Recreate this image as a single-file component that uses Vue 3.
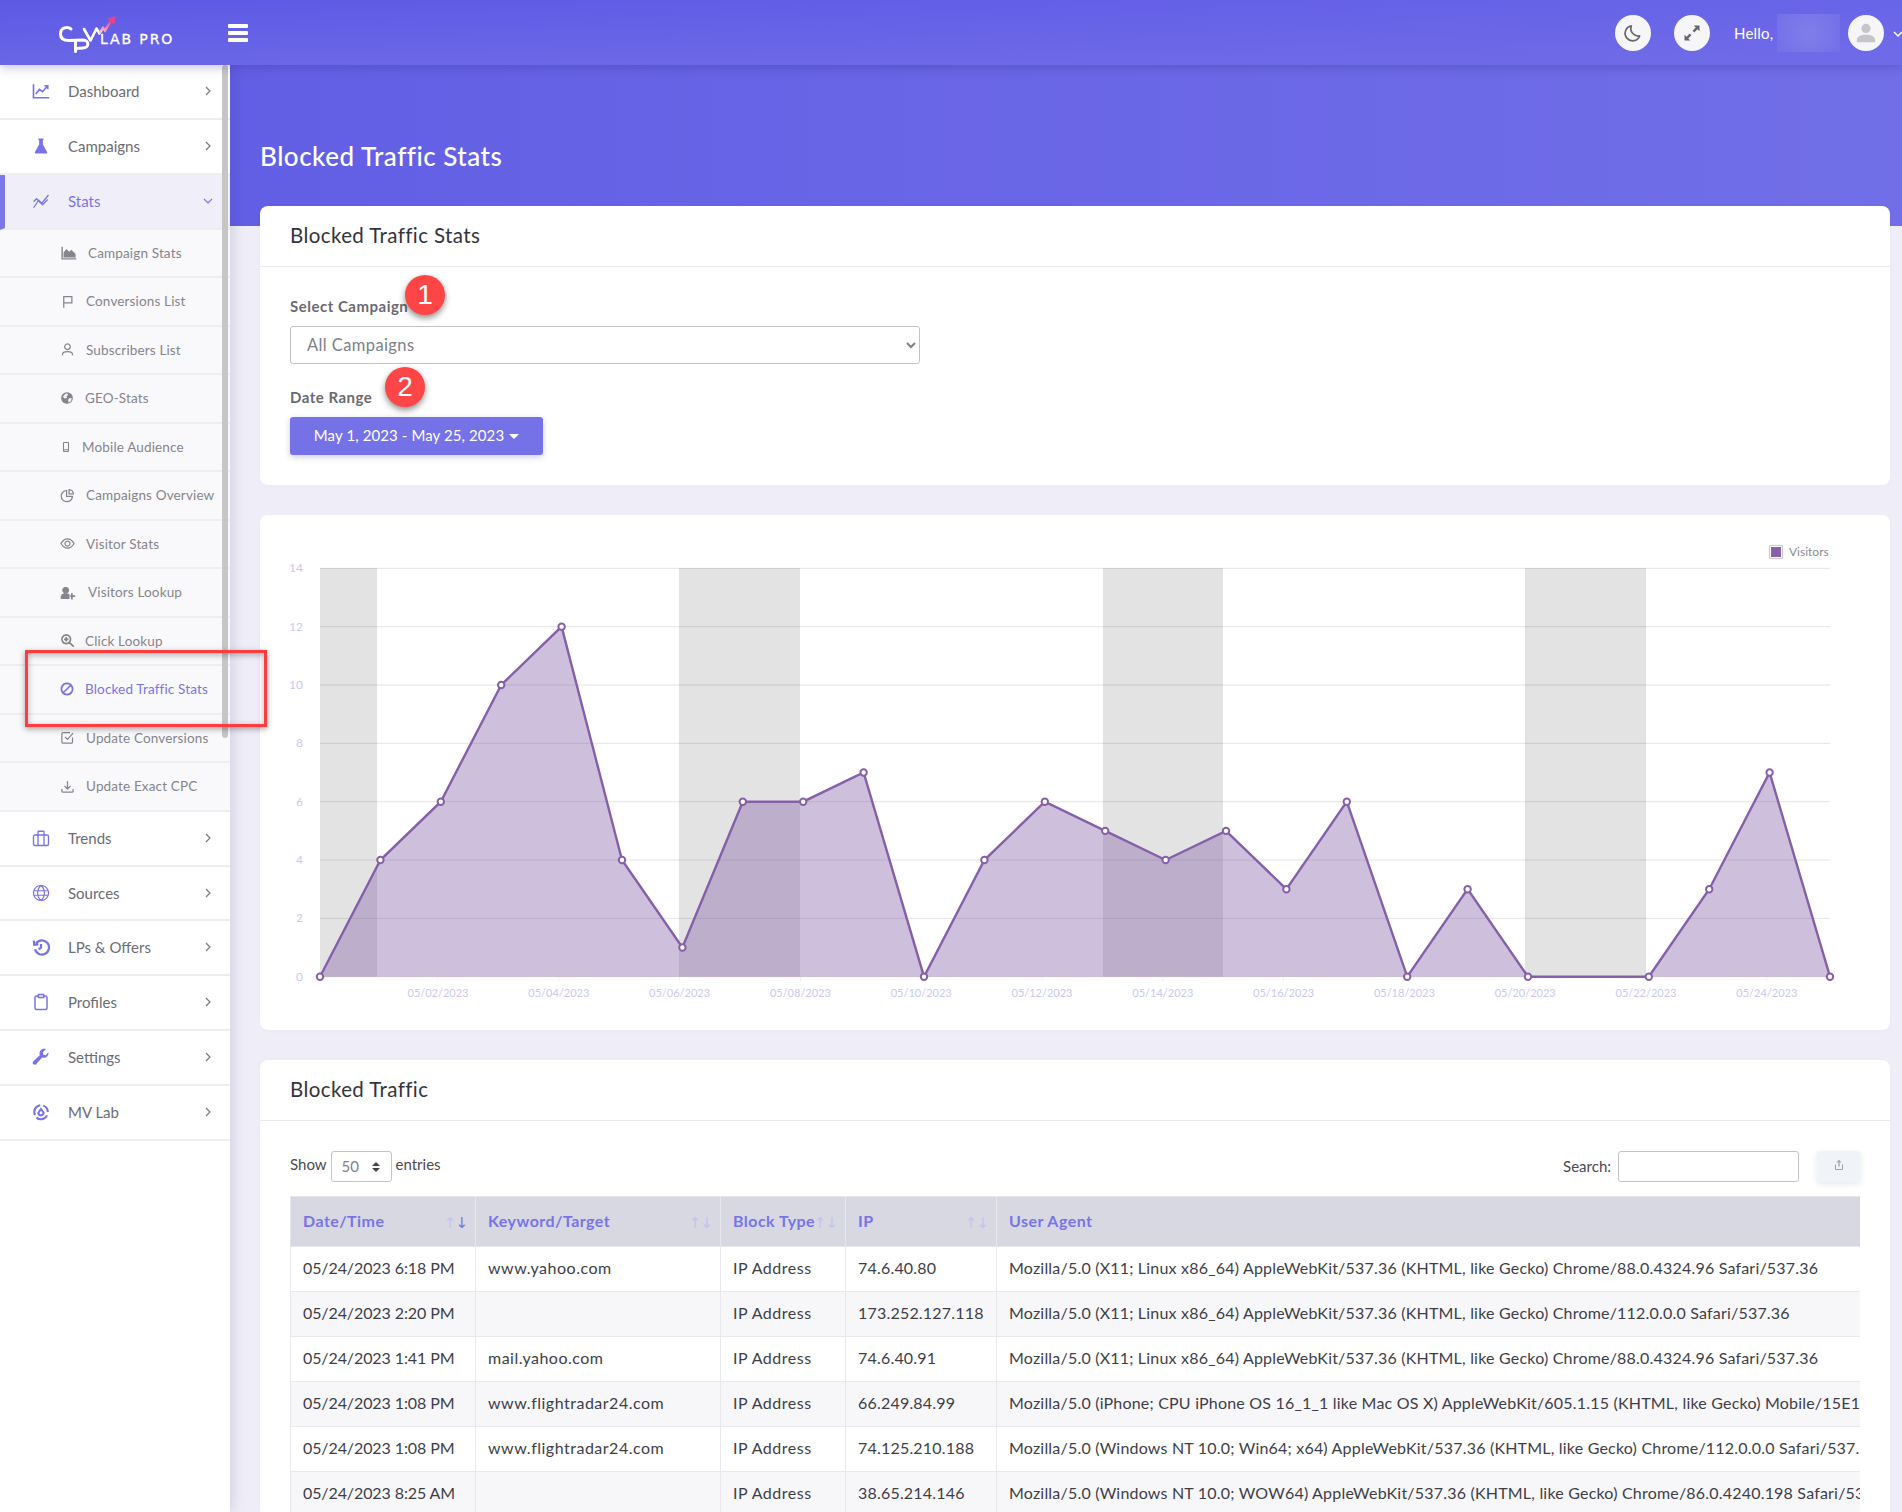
<script setup>
const icons = {
  chartLine: { d: 'M2 3V21H23M5 16L10 10L14 13L21 5M16.500 5H21V9.500', w: 2.200 },
  flask: { d: 'M8.500 2h7v2H14.500V10l5.500 9.500c.6 1.100-.1 2.500-1.400 2.500H5.400c-1.300 0-2-1.400-1.400-2.500L9.500 10V4h-1z', fill: true },
  stats: { d: 'M2 21L9 11L13 15L22 4M2 13L6 9L14 17L21 10', w: 1.700 },
  chartArea: { d: 'M2 4V22H23V20H4V4zM5 19V12l4-5 4 4 3-3 6 6v5z', fill: true },
  flag: { d: 'M6 22V3M6 4H19L19 14H6', w: 2 },
  user: { d: 'M12 3a4.500 4.500 0 1 0 .01 0zM4 21v-1c0-3 3-4.500 8-4.500s8 1.500 8 4.500v1', w: 2 },
  globe: { d: 'M12 2a10 10 0 1 0 .01 0zM8 6l4-2 2 3-3 2 1 3-4 1-3-3zM15 13l5-1-1 5-4 3-1-4z', fill: true, evenodd: true },
  mobile: { d: 'M8 3h8a1 1 0 0 1 1 1v16a1 1 0 0 1-1 1H8a1 1 0 0 1-1-1V4a1 1 0 0 1 1-1zM7 17.500h10', w: 2.200 },
  pie: { d: 'M10.500 4a9 9 0 1 0 9.500 9.500H10.500zM14.500 2.500a7.500 7.500 0 0 1 7 7h-7z', w: 2 },
  eye: { d: 'M1.500 12C5 6 9 4.500 12 4.500S19 6 22.500 12C19 18 15 19.500 12 19.500S5 18 1.500 12zM12 8a4 4 0 1 0 .01 0z', w: 2 },
  userPlus: { d: 'M8 4a4.800 4.800 0 1 0 .01 0zM1 21v-3c0-2.500 2-4.500 5-4.500h4c1.500 0 2.800.5 3.500 1.400V21zM18 13v3h3.500v2.500H18V22h-2.500v-3.500H14.500V16h1v-3z', fill: true },
  searchPlus: { d: 'M10 3a7 7 0 1 0 .01 0zM15.500 15.500L22 22M10 6.500v7M6.500 10h7', w: 2.800 },
  ban: { d: 'M12 2.500a9.500 9.500 0 1 0 .01 0zM6 18L18 6', w: 3 },
  checkSquare: { d: 'M20 12v7a2 2 0 0 1-2 2H5a2 2 0 0 1-2-2V6a2 2 0 0 1 2-2h11M8 11l4 4L21 5', w: 2 },
  download: { d: 'M12 3v13M7 11l5 5 5-5M3 16v3a2 2 0 0 0 2 2h14a2 2 0 0 0 2-2v-3', w: 2 },
  suitcase: { d: 'M4 8h16a2 2 0 0 1 2 2v10a2 2 0 0 1-2 2H4a2 2 0 0 1-2-2V10a2 2 0 0 1 2-2zM8 8V4a1 1 0 0 1 1-1h6a1 1 0 0 1 1 1v4M8 8v14M16 8v14', w: 1.800 },
  globeLine: { d: 'M12 2a10 10 0 1 0 .01 0zM12 2c-6 5-6 15 0 20M12 2c6 5 6 15 0 20M2.500 9h19M2.500 15h19', w: 1.600 },
  history: { d: 'M5.500 7A9.500 9.500 0 1 1 4 15M12 8v5l-3 2M2.500 3.500L3 9l5.500-.5', w: 3 },
  clipboard: { d: 'M7.500 4H6a2 2 0 0 0-2 2v14a2 2 0 0 0 2 2h12a2 2 0 0 0 2-2V6a2 2 0 0 0-2-2h-1.500M8.500 2h7v4h-7z', w: 2 },
  wrench: { d: 'M22 6.500c0 3.600-3 6.500-6.500 6.500-.8 0-1.400-.1-2-.3L5.500 21.500c-1.200 1.200-3 1-4-.2-.9-1.100-.7-2.800.3-3.800l8.600-8C10.100 8.700 10 8 10 7c0-3.500 3-6 6.500-6 1 0 1.600.2 2.200.4L14.500 5.600l.6 3.300 3.300.6 3.300-3.800c.2.2.3.5.3.8z', fill: true },
  mvLab: { d: 'M11 3a9 9 0 0 0-7 13M6 19.500a9 9 0 0 0 14-3M21 12a9 9 0 0 0-6-8.500M12 8l3.500 5a3.500 3.500 0 1 1-7 0z', w: 2.800 },
}

const topMenu = [
  { label: 'Dashboard', icon: 'chartLine' },
  { label: 'Campaigns', icon: 'flask' },
]
const bottomMenu = [
  { label: 'Trends', icon: 'suitcase' },
  { label: 'Sources', icon: 'globeLine' },
  { label: 'LPs & Offers', icon: 'history' },
  { label: 'Profiles', icon: 'clipboard' },
  { label: 'Settings', icon: 'wrench' },
  { label: 'MV Lab', icon: 'mvLab' },
]
const subMenu = [
  { label: 'Campaign Stats', icon: 'chartArea', w: 17, gap: 11 },
  { label: 'Conversions List', icon: 'flag', w: 15, gap: 11 },
  { label: 'Subscribers List', icon: 'user', w: 15, gap: 11 },
  { label: 'GEO-Stats', icon: 'globe', w: 14, gap: 11 },
  { label: 'Mobile Audience', icon: 'mobile', w: 12, gap: 10 },
  { label: 'Campaigns Overview', icon: 'pie', w: 15, gap: 11 },
  { label: 'Visitor Stats', icon: 'eye', w: 15, gap: 11 },
  { label: 'Visitors Lookup', icon: 'userPlus', w: 17, gap: 11 },
  { label: 'Click Lookup', icon: 'searchPlus', w: 15, gap: 10 },
  { label: 'Blocked Traffic Stats', icon: 'ban', w: 14, gap: 11, active: true },
  { label: 'Update Conversions', icon: 'checkSquare', w: 15, gap: 11 },
  { label: 'Update Exact CPC', icon: 'download', w: 15, gap: 11 },
]

// chart coordinates are relative to the card (card starts at x=260, y=515)
const plotLeft = 60
const plotRight = 1570
const plotBottom = 461.700
const unit = 29.170
const step = (plotRight - plotLeft) / 25
const values = [0, 4, 6, 10, 12, 4, 1, 6, 6, 7, 0, 4, 6, 5, 4, 5, 3, 6, 0, 3, 0, 0, 0, 3, 7, 0]
const points = values.map((v, i) => ({ x: plotLeft + step * i, y: plotBottom - v * unit, i }))
const linePoints = points.map((p) => `${p.x},${p.y}`).join(' ')
const areaPoints = `${plotLeft},${plotBottom} ${linePoints} ${plotRight},${plotBottom}`
const markers = points.filter((p) => p.i !== 21)
const bands = [
  { x: 60, w: 57 },
  { x: 419, w: 121 },
  { x: 843, w: 120 },
  { x: 1265, w: 121 },
]
const yTicks = [0, 2, 4, 6, 8, 10, 12, 14]
const xTicks = ['05/02', '05/04', '05/06', '05/08', '05/10', '05/12', '05/14', '05/16', '05/18', '05/20', '05/22', '05/24'].map(
  (d, i) => ({ label: `${d}/2023`, x: 178 + i * 120.8 })
)

const columns = ['Date/Time', 'Keyword/Target', 'Block Type', 'IP', 'User Agent']
const agent88 = 'Mozilla/5.0 (X11; Linux x86_64) AppleWebKit/537.36 (KHTML, like Gecko) Chrome/88.0.4324.96 Safari/537.36'
const rows = [
  ['05/24/2023 6:18 PM', 'www.yahoo.com', 'IP Address', '74.6.40.80', agent88],
  ['05/24/2023 2:20 PM', '', 'IP Address', '173.252.127.118', 'Mozilla/5.0 (X11; Linux x86_64) AppleWebKit/537.36 (KHTML, like Gecko) Chrome/112.0.0.0 Safari/537.36'],
  ['05/24/2023 1:41 PM', 'mail.yahoo.com', 'IP Address', '74.6.40.91', agent88],
  ['05/24/2023 1:08 PM', 'www.flightradar24.com', 'IP Address', '66.249.84.99', 'Mozilla/5.0 (iPhone; CPU iPhone OS 16_1_1 like Mac OS X) AppleWebKit/605.1.15 (KHTML, like Gecko) Mobile/15E148 Safari/604.1'],
  ['05/24/2023 1:08 PM', 'www.flightradar24.com', 'IP Address', '74.125.210.188', 'Mozilla/5.0 (Windows NT 10.0; Win64; x64) AppleWebKit/537.36 (KHTML, like Gecko) Chrome/112.0.0.0 Safari/537.36'],
  ['05/24/2023 8:25 AM', '', 'IP Address', '38.65.214.146', 'Mozilla/5.0 (Windows NT 10.0; WOW64) AppleWebKit/537.36 (KHTML, like Gecko) Chrome/86.0.4240.198 Safari/537.36'],
]
</script>

<template>
  <div class="app">
    <header class="topbar">
      <div class="brand">
        <svg class="brand__mark" viewBox="58 8 60 42" width="60" height="42">
          <defs>
            <linearGradient id="arrowGrad" x1="0" y1="1" x2="1" y2="0">
              <stop offset="0" stop-color="#f3d3e6" />
              <stop offset="1" stop-color="#ec3f8a" />
            </linearGradient>
          </defs>
          <path d="M71 25C68 22.500 60.500 23 60.500 30C60.500 35.500 65 36.500 69 36.500L83 36C89.500 36 89.500 44 83 44L75.500 44.500M75.500 36.500V47.500" fill="none" stroke="#fff" stroke-width="3" stroke-linecap="round" />
          <path d="M84 25L90.500 36.500L96.500 24.500L99.500 29.500" fill="none" stroke="#fff" stroke-width="2.600" stroke-linejoin="round" stroke-linecap="round" />
          <path d="M99.500 29.500L103 24L105 26.500L111 17" fill="none" stroke="url(#arrowGrad)" stroke-width="2.600" />
          <path d="M107 15L115.500 12L114.500 20.500z" fill="#ec3f8a" />
        </svg>
        <span class="brand__text">LAB PRO</span>
      </div>
      <button class="burger"><span></span><span></span><span></span></button>
      <div class="topbar__right">
        <span class="round-btn">
          <svg viewBox="0 0 24 24" width="20" height="20"><path d="M20 15.500A9 9 0 0 1 10 3.500a9 9 0 1 0 10 12z" fill="none" stroke="#67676d" stroke-width="2" stroke-linejoin="round" /></svg>
        </span>
        <span class="round-btn">
          <svg viewBox="0 0 24 24" width="20" height="20"><path d="M14 3h7v7l-2.500-2.500-3.800 3.800-2-2 3.800-3.800zM10 21H3v-7l2.500 2.500 3.800-3.800 2 2-3.800 3.800z" fill="#67676d" /></svg>
        </span>
        <div class="hello">
          <span>Hello, c</span>
          <i class="hello__blur"></i>
        </div>
        <span class="round-btn round-btn--avatar">
          <svg viewBox="0 0 24 24" width="22" height="22"><path d="M12 12a5 5 0 1 0 0-10 5 5 0 0 0 0 10zM2 20c0-4 4-6 10-6s10 2 10 6v2H2z" fill="#c5c5ca" /></svg>
        </span>
        <svg class="topbar__chevron" viewBox="0 0 12 12" width="12" height="12"><path d="M2 4l4 4 4-4" fill="none" stroke="#fff" stroke-width="1.500" /></svg>
      </div>
    </header>

    <div class="layout">
      <aside class="sidebar">
        <a v-for="item in topMenu" :key="item.label" class="menu-item">
          <svg class="menu-item__icon" viewBox="0 0 24 24" width="18" height="18">
            <path :d="icons[item.icon].d" :fill="icons[item.icon].fill ? 'currentColor' : 'none'" :stroke="icons[item.icon].fill ? 'none' : 'currentColor'" :stroke-width="icons[item.icon].w" />
          </svg>
          <span>{{ item.label }}</span>
          <svg class="menu-item__chevron" viewBox="0 0 12 12" width="12" height="12"><path d="M4 2l4 4-4 4" fill="none" stroke="currentColor" stroke-width="1.200" /></svg>
        </a>

        <a class="menu-item menu-item--open">
          <svg class="menu-item__icon" viewBox="0 0 24 24" width="18" height="18">
            <path :d="icons.stats.d" fill="none" stroke="currentColor" :stroke-width="icons.stats.w" />
          </svg>
          <span>Stats</span>
          <svg class="menu-item__chevron" viewBox="0 0 12 12" width="12" height="12"><path d="M2 4l4 4 4-4" fill="none" stroke="currentColor" stroke-width="1.200" /></svg>
        </a>

        <a v-for="item in subMenu" :key="item.label" class="sub-item" :class="{ 'sub-item--active': item.active }">
          <svg viewBox="0 0 24 24" :width="item.w" :height="item.w" :style="{ marginRight: item.gap + 'px' }">
            <path
              :d="icons[item.icon].d"
              :fill="icons[item.icon].fill ? 'currentColor' : 'none'"
              :fill-rule="icons[item.icon].evenodd ? 'evenodd' : 'nonzero'"
              :stroke="icons[item.icon].fill ? 'none' : 'currentColor'"
              :stroke-width="icons[item.icon].w"
            />
          </svg>
          <span>{{ item.label }}</span>
        </a>

        <a v-for="item in bottomMenu" :key="item.label" class="menu-item">
          <svg class="menu-item__icon" viewBox="0 0 24 24" width="18" height="18">
            <path :d="icons[item.icon].d" :fill="icons[item.icon].fill ? 'currentColor' : 'none'" :stroke="icons[item.icon].fill ? 'none' : 'currentColor'" :stroke-width="icons[item.icon].w" />
          </svg>
          <span>{{ item.label }}</span>
          <svg class="menu-item__chevron" viewBox="0 0 12 12" width="12" height="12"><path d="M4 2l4 4-4 4" fill="none" stroke="currentColor" stroke-width="1.200" /></svg>
        </a>

        <i class="sidebar__scroll"></i>
      </aside>

      <main class="main">
        <div class="page-head">
          <h1>Blocked Traffic Stats</h1>
        </div>

        <section class="card card--first">
          <h2 class="card__title">Blocked Traffic Stats</h2>
          <div class="filters">
            <label class="field-label">Select Campaign</label>
            <select class="campaign-select">
              <option>All Campaigns</option>
            </select>
            <label class="field-label field-label--date">Date Range</label>
            <button class="date-btn">May 1, 2023 - May 25, 2023 <i class="caret"></i></button>
          </div>
        </section>

        <section class="card chart-card">
          <svg viewBox="0 0 1630 515" width="1630" height="515" class="chart">
            <rect v-for="b in bands" :key="b.x" :x="b.x" y="53" :width="b.w" height="408.700" fill="rgba(0,0,0,0.11)" />
            <line v-for="t in yTicks" :key="t" :x1="plotLeft" :x2="plotRight" :y1="plotBottom - t * unit" :y2="plotBottom - t * unit" stroke="rgba(0,0,0,0.11)" />
            <text v-for="t in yTicks" :key="'y' + t" x="43" :y="plotBottom - t * unit + 4" text-anchor="end" class="chart__label">{{ t }}</text>
            <line v-for="t in xTicks" :key="'t' + t.x" :x1="t.x" :x2="t.x" :y1="plotBottom" :y2="plotBottom + 5" stroke="rgba(0,0,0,0.06)" />
            <text v-for="t in xTicks" :key="t.label" :x="t.x" y="481.500" text-anchor="middle" class="chart__label chart__label--x">{{ t.label }}</text>
            <polygon :points="areaPoints" fill="rgba(133,96,168,0.4)" />
            <polyline :points="linePoints" fill="none" stroke="#8560a8" stroke-width="2.400" />
            <circle v-for="p in markers" :key="p.i" :cx="p.x" :cy="p.y" r="3.200" fill="#fff" stroke="#8560a8" stroke-width="2" />
            <rect x="1509.500" y="30.500" width="13" height="13" fill="#fff" stroke="#ccc" />
            <rect x="1511" y="32" width="10" height="10" fill="#8a60a8" />
            <text x="1529" y="41" class="chart__legend">Visitors</text>
          </svg>
        </section>

        <section class="card">
          <h2 class="card__title">Blocked Traffic</h2>
          <div class="table-box">
            <div class="table-tools">
              <div class="table-tools__show">
                <span>Show</span>
                <span class="len-select">50<i class="len-select__arrows"></i></span>
                <span>entries</span>
              </div>
              <div class="table-tools__search">
                <span class="table-tools__label">Search:</span>
                <input type="text" />
                <button class="export-btn">
                  <svg viewBox="0 0 24 24" width="12" height="12"><path d="M12 15V3M8 7l4-4 4 4" fill="none" stroke="#8a8a90" stroke-width="2" /><path d="M5 11v10h14V11" fill="none" stroke="#a0a0a8" stroke-width="2" /></svg>
                </button>
              </div>
            </div>
            <div class="table-wrap">
              <table>
                <thead>
                  <tr>
                    <th v-for="(col, i) in columns" :key="col">
                      {{ col }}
                      <span v-if="i < 4" class="sort" :class="{ 'sort--desc': i === 0 }"><b>↑</b><b>↓</b></span>
                    </th>
                  </tr>
                </thead>
                <tbody>
                  <tr v-for="(row, r) in rows" :key="r">
                    <td v-for="(cell, c) in row" :key="c">{{ cell }}</td>
                  </tr>
                </tbody>
              </table>
            </div>
          </div>
        </section>
      </main>
    </div>

    <i class="mark-box"></i>
    <span class="badge badge--one">1</span>
    <span class="badge badge--two">2</span>
  </div>
</template>

<style>
html,
body {
  margin: 0;
  height: 1512px;
  overflow: hidden;
}
</style>

<style scoped>
.app {
  position: relative;
  width: 1902px;
  height: 1512px;
  overflow: hidden;
  font-family: 'Lato', 'Liberation Sans', sans-serif;
  background: #efeef8;
}

/* TOPBAR ----------------------------- */
.topbar {
  position: relative;
  z-index: 3;
  display: flex;
  align-items: center;
  height: 65px;
  background: linear-gradient(90deg, rgba(118, 114, 234, 0), rgba(118, 114, 234, 0.45)), linear-gradient(180deg, #5e59e5, #6a66e6);
  box-shadow: 0 2px 10px rgba(50, 40, 120, 0.3);
}

.brand {
  display: flex;
  align-items: flex-start;
  width: 228px;
  height: 42px;
  padding-left: 58px;
  box-sizing: border-box;
}

.brand__mark {
  flex: none;
}

.brand__text {
  margin: 20px 0 0 -18px;
  color: #fff;
  font-family: 'DejaVu Sans', sans-serif;
  font-size: 14px;
  letter-spacing: 1.900px;
  line-height: 14px;
  white-space: nowrap;
  -webkit-text-stroke: 0.3px #fff;
}

.burger {
  display: flex;
  flex-direction: column;
  gap: 3px;
  width: 20px;
  padding: 0;
  border: 0;
  background: none;
}

.burger span {
  height: 4px;
  border-radius: 1px;
  background: #fff;
}

.topbar__right {
  display: flex;
  align-items: center;
  margin-left: auto;
  margin-right: -2px;
}

.round-btn {
  display: flex;
  align-items: center;
  justify-content: center;
  width: 36px;
  height: 36px;
  margin-right: 23px;
  border-radius: 50%;
  background: #f6f6f8;
}

.hello {
  position: relative;
  width: 106px;
  margin-left: 1px;
  margin-right: 8px;
  color: #fff;
  font-size: 15px;
  letter-spacing: 0.2px;
}

.hello__blur {
  position: absolute;
  left: 43px;
  top: -10px;
  width: 63px;
  height: 38px;
  background: radial-gradient(circle, #807dea, #7370e8);
}

.round-btn--avatar {
  margin-right: 8px;
}

.topbar__chevron {
  margin-top: 2px;
}

/* LAYOUT ----------------------------- */
.layout {
  display: flex;
  height: 1447px;
}

.sidebar {
  position: relative;
  z-index: 2;
  flex: none;
  width: 230px;
  background: #fff;
  box-shadow: 2px 0 14px rgba(50, 40, 110, 0.16);
}

.sidebar a {
  box-sizing: border-box;
  display: flex;
  align-items: center;
  border-bottom: 2px solid #eeeef1;
}

.menu-item {
  height: 54.900px;
  padding-left: 32px;
  padding-bottom: 1px;
  color: #6c6c74;
  font-size: 15px;
}

.menu-item__icon {
  flex: none;
  margin-right: 18px;
  color: #7874e8;
}

.menu-item__chevron {
  margin-left: auto;
  margin-right: 16px;
  color: #7a7a80;
}

.menu-item--open {
  border-left: 5px solid #7c78ea;
  padding-left: 27px;
  color: #7874e8;
  background: #f0eff9;
}

.menu-item--open .menu-item__chevron {
  color: #7874e8;
}

.sub-item {
  height: 48.500px;
  padding-left: 60px;
  color: #85858d;
  font-size: 13.500px;
  letter-spacing: 0.15px;
  background: #f9f9fc;
  white-space: nowrap;
}

.sub-item svg {
  flex: none;
}

.sub-item--active {
  color: #7874e8;
}

.sidebar__scroll {
  position: absolute;
  top: 0;
  left: 222px;
  width: 6px;
  height: 673px;
  border-radius: 3px;
  background: #c6c6c6;
}

.main {
  flex: 1;
  min-width: 0;
}

.page-head {
  height: 161px;
  padding: 73px 0 0 30px;
  box-sizing: border-box;
  background: linear-gradient(90deg, #635fe5, #716ee8);
}

.page-head h1 {
  margin: 0;
  color: #fff;
  font-size: 26px;
  font-weight: 500;
  letter-spacing: 0.5px;
  line-height: 36px;
}

/* CARDS ----------------------------- */
.card {
  margin: 0 12px 30px 30px;
  border-radius: 8px;
  background: #fff;
  box-shadow: 0 1px 4px rgba(70, 60, 140, 0.03);
}

.card--first {
  margin-top: -20px;
}

.card__title {
  box-sizing: border-box;
  height: 61px;
  margin: 0;
  padding: 0 30px;
  border-bottom: 1px solid #eaeaee;
  color: #34343c;
  font-size: 20.500px;
  font-weight: 400;
  letter-spacing: 0.4px;
  line-height: 58px;
}

.filters {
  display: flex;
  flex-direction: column;
  align-items: flex-start;
  padding: 29px 30px 30px;
}

.field-label {
  margin-bottom: 10px;
  color: #6a6a72;
  font-size: 15px;
  font-weight: 700;
  letter-spacing: 0.5px;
  line-height: 20px;
}

.field-label--date {
  margin-top: 23px;
}

.campaign-select {
  box-sizing: border-box;
  width: 630px;
  height: 38px;
  padding: 0 12px;
  border: 1px solid #c4c4c8;
  border-radius: 3px;
  color: #808088;
  font-family: inherit;
  font-size: 16.500px;
  letter-spacing: 0.4px;
  background: #fff;
}

.date-btn {
  box-sizing: border-box;
  width: 253px;
  height: 38px;
  padding: 0 0 2px;
  border: 0;
  border-radius: 3px;
  color: #fff;
  font-family: inherit;
  font-size: 15px;
  letter-spacing: 0.1px;
  background: #7571e6;
  box-shadow: 0 2px 6px rgba(60, 50, 140, 0.25);
}

.caret {
  display: inline-block;
  margin-left: 1px;
  border-top: 5px solid #fff;
  border-left: 5px solid transparent;
  border-right: 5px solid transparent;
  vertical-align: 2px;
}

.chart-card {
  height: 515px;
  overflow: hidden;
}

.chart {
  display: block;
}

.chart__label {
  fill: #c9c7f1;
  font-size: 12px;
}

.chart__label--x {
  font-size: 11px;
}

.chart__legend {
  fill: #8a8a90;
  font-size: 12px;
}

/* TABLE ----------------------------- */
.table-box {
  padding: 30px 30px 0;
}

.table-tools {
  display: flex;
  justify-content: space-between;
  height: 31px;
  margin-bottom: 14px;
  color: #4a4a52;
  font-size: 15px;
}

.table-tools__show,
.table-tools__search {
  display: flex;
  align-items: center;
}

.table-tools__show > span:first-child,
.table-tools__show > span:last-child {
  margin-top: -5px;
}

.table-tools__label {
  margin-top: -2px;
}

.len-select {
  position: relative;
  box-sizing: border-box;
  width: 61px;
  height: 31px;
  margin: 0 4px;
  padding-left: 10px;
  border: 1px solid #c4c4c8;
  border-radius: 3px;
  color: #808088;
  line-height: 29px;
}

.len-select__arrows {
  position: absolute;
  right: 11px;
  top: 7px;
  width: 0;
  height: 3px;
  border-left: 4px solid transparent;
  border-right: 4px solid transparent;
  border-bottom: 4px solid #444;
}

.len-select__arrows::after {
  content: '';
  position: absolute;
  left: -4px;
  top: 9px;
  border-left: 4px solid transparent;
  border-right: 4px solid transparent;
  border-top: 4px solid #444;
}

.table-tools__search input {
  box-sizing: border-box;
  width: 181px;
  height: 31px;
  margin-left: 7px;
  border: 1px solid #c4c4c8;
  border-radius: 3px;
}

.export-btn {
  width: 43px;
  height: 31px;
  margin-left: 18px;
  padding: 0;
  border: 0;
  border-radius: 3px;
  background: #f0f3f7;
  box-shadow: 0 2px 6px rgba(60, 60, 90, 0.12);
}

.table-wrap {
  overflow: hidden;
}

table {
  table-layout: fixed;
  width: 1906px;
  border-collapse: collapse;
  white-space: nowrap;
}

th {
  position: relative;
  box-sizing: border-box;
  height: 50px;
  padding: 0 12px 2px;
  border: 1px solid #e6e6ec;
  color: #7874e8;
  font-size: 16px;
  font-weight: 700;
  letter-spacing: 0.45px;
  text-align: left;
  background: #d7d8e2;
}

th:nth-child(1) {
  width: 185px;
}

th:nth-child(2) {
  width: 245px;
}

th:nth-child(3) {
  width: 125px;
}

th:nth-child(4) {
  width: 151px;
}

th:nth-child(5) {
  width: 1200px;
}

.sort {
  position: absolute;
  right: 8px;
  top: 17px;
  color: #c4c3ee;
  font-family: 'DejaVu Sans', sans-serif;
  font-size: 15px;
  letter-spacing: -1px;
}

.sort b {
  font-weight: 400;
}

.sort--desc b + b {
  color: #7874e8;
}

td {
  box-sizing: border-box;
  height: 45px;
  padding: 0 12px 3px;
  border: 1px solid #e8e8ee;
  color: #3e3e48;
  font-size: 16px;
  letter-spacing: 0.2px;
  overflow: hidden;
}

td:nth-child(1) {
  letter-spacing: -0.1px;
}

td:nth-child(2),
td:nth-child(3) {
  letter-spacing: 0.5px;
}

tbody tr:nth-child(even) td {
  background: #f7f7fa;
}

/* ANNOTATIONS ----------------------------- */
.mark-box {
  position: absolute;
  z-index: 4;
  left: 25px;
  top: 650px;
  box-sizing: border-box;
  width: 242px;
  height: 77px;
  border: 3px solid #ff3d41;
  box-shadow: 0 2px 6px rgba(0, 0, 0, 0.35), inset 0 2px 6px rgba(0, 0, 0, 0.3);
}

.badge {
  position: absolute;
  z-index: 4;
  display: flex;
  align-items: center;
  justify-content: center;
  width: 40px;
  height: 40px;
  border-radius: 50%;
  color: #fff;
  font-family: 'Liberation Sans', sans-serif;
  font-size: 28px;
  background: #ff4545;
  box-shadow: 0 3px 6px rgba(0, 0, 0, 0.45);
}

.badge--one {
  left: 405px;
  top: 275px;
}

.badge--two {
  left: 385px;
  top: 367px;
}
</style>
